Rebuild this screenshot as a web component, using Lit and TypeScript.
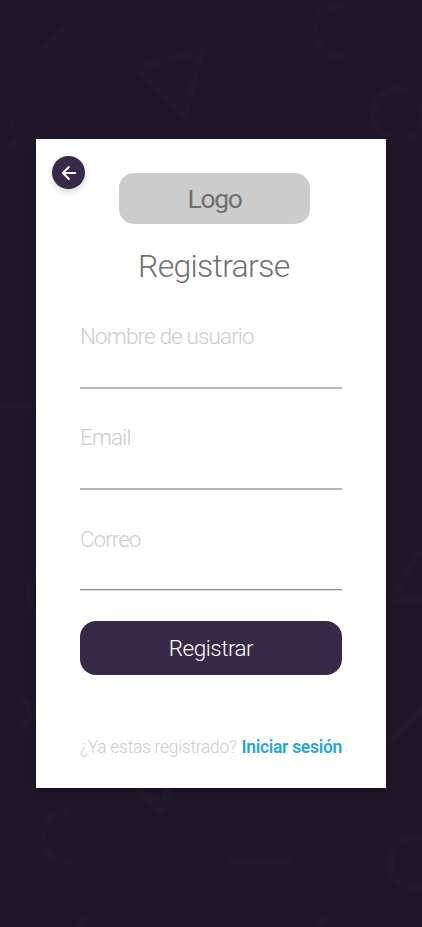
import { LitElement, html, css, svg } from "lit";
import { customElement } from "lit/decorators.js";

const shapes = [
  "M43.5 51.5L85 11",
  "M137.500 67.500L201.500 50.500L184.500 114.500Z",
  "M340 5.500A25.500 25.500 0 0 0 340 56.500",
  "M12 124L36 147M37 123L12 147",
  "M373.500 115a25.500 25.500 0 1 0 51 0a25.500 25.500 0 1 0 -51 0",
  "M4 405.500H60",
  "M55 570A25.500 25.500 0 0 0 55 621",
  "M23 702L46 726M46 702L23 726",
  "M452 598.500H392L425 541.500Z",
  "M380 750L426 706",
  "M115 763.500L162 810.500L179 746.500Z",
  "M67.500 811.500A25.250 25.250 0 0 0 67.500 862",
  "M232 861.700H289",
  "M390 862a25.500 25.500 0 1 0 51 0a25.500 25.500 0 1 0 -51 0",
  "M43.500 961L85 920.500",
  "M340 915.500A25.500 25.500 0 0 0 340 966.500",
];

@customElement("app-root")
export class AppRoot extends LitElement {
  static styles = css`
    :host {
      display: block;
      position: relative;
      box-sizing: border-box;
      width: 100%;
      height: 927px;
      padding: 139px 36px;
      overflow: hidden;
      background: #1e1526;
      font-family: Roboto, "Open Sans", sans-serif;
      font-weight: 300;
    }
    .pattern {
      position: absolute;
      inset: 0;
      fill: none;
      stroke: #211829;
      stroke-width: 7.6;
      stroke-linecap: round;
      stroke-linejoin: round;
    }
    .card {
      position: relative;
      box-sizing: border-box;
      height: 649px;
      padding: 34px 44px 0;
      background: #fff;
      box-shadow: 0 3px 6px rgba(0, 0, 0, 0.16);
    }
    .back {
      position: absolute;
      left: 16px;
      top: 17px;
      width: 33px;
      height: 33px;
      padding: 0;
      border: 0;
      border-radius: 50%;
      background: #382948;
      box-shadow: 0 3px 6px rgba(0, 0, 0, 0.16);
    }
    .back svg {
      display: block;
      fill: none;
      stroke: #fff;
      stroke-width: 2;
      stroke-linecap: round;
      stroke-linejoin: round;
    }
    .logo {
      box-sizing: border-box;
      width: 191px;
      height: 51px;
      margin-left: 39px;
      border-radius: 15px;
      background: #ccc;
      color: #707070;
      text-align: center;
      font-size: 26.5px;
      font-weight: 400;
      line-height: 52px;
      letter-spacing: -1.3px;
    }
    h1 {
      margin: 18px 0 0;
      padding-left: 58px;
      height: 48px;
      color: #707070;
      font-size: 32px;
      font-weight: 300;
      line-height: 48px;
      letter-spacing: -0.7px;
      white-space: nowrap;
    }
    .form {
      display: flex;
      flex-direction: column;
      margin-top: 29px;
    }
    .field {
      box-sizing: border-box;
      height: 70px;
      margin-bottom: 31px;
      border-bottom: 2px solid #b7b7b7;
      color: #ccc;
      font-size: 22.5px;
      line-height: 34px;
      letter-spacing: -0.87px;
      white-space: nowrap;
    }
    .field:nth-child(2) {
      margin-bottom: 32px;
    }
    .field:nth-child(3) {
      height: 68px;
      margin-bottom: 31px;
      border-bottom: 1px solid #929292;
      box-shadow: 0 1px #dcdcdc;
      letter-spacing: -1px;
    }
    .submit {
      height: 54px;
      padding: 0;
      border: 0;
      border-radius: 16px;
      background: #382948;
      color: #fff;
      font: inherit;
      font-size: 22.5px;
      line-height: 54px;
      letter-spacing: -0.5px;
    }
    .foot {
      display: flex;
      justify-content: space-between;
      margin-top: 58px;
      color: #ccc;
      font-size: 17.5px;
      line-height: 28px;
      white-space: nowrap;
      letter-spacing: -0.3px;
    }
    .foot b {
      color: #27a6d4;
      font-weight: 600;
    }
  `;

  render() {
    return html`
      <svg class="pattern" width="422" height="927" viewBox="0 0 422 927">
        ${shapes.map((d) => svg`<path d=${d}></path>`)}
      </svg>
      <main class="card">
        <button class="back" aria-label="Volver">
          <svg width="33" height="33" viewBox="0 0 33 33">
            <path d="M23.200 17H11M16.900 11L10.900 17L16.900 23"></path>
          </svg>
        </button>
        <div class="logo">Logo</div>
        <h1>Registrarse</h1>
        <div class="form">
          <div class="field">Nombre de usuario</div>
          <div class="field">Email</div>
          <div class="field">Correo</div>
          <button class="submit">Registrar</button>
        </div>
        <div class="foot"><span>¿Ya estas registrado?</span><b>Iniciar sesión</b></div>
      </main>
    `;
  }
}
